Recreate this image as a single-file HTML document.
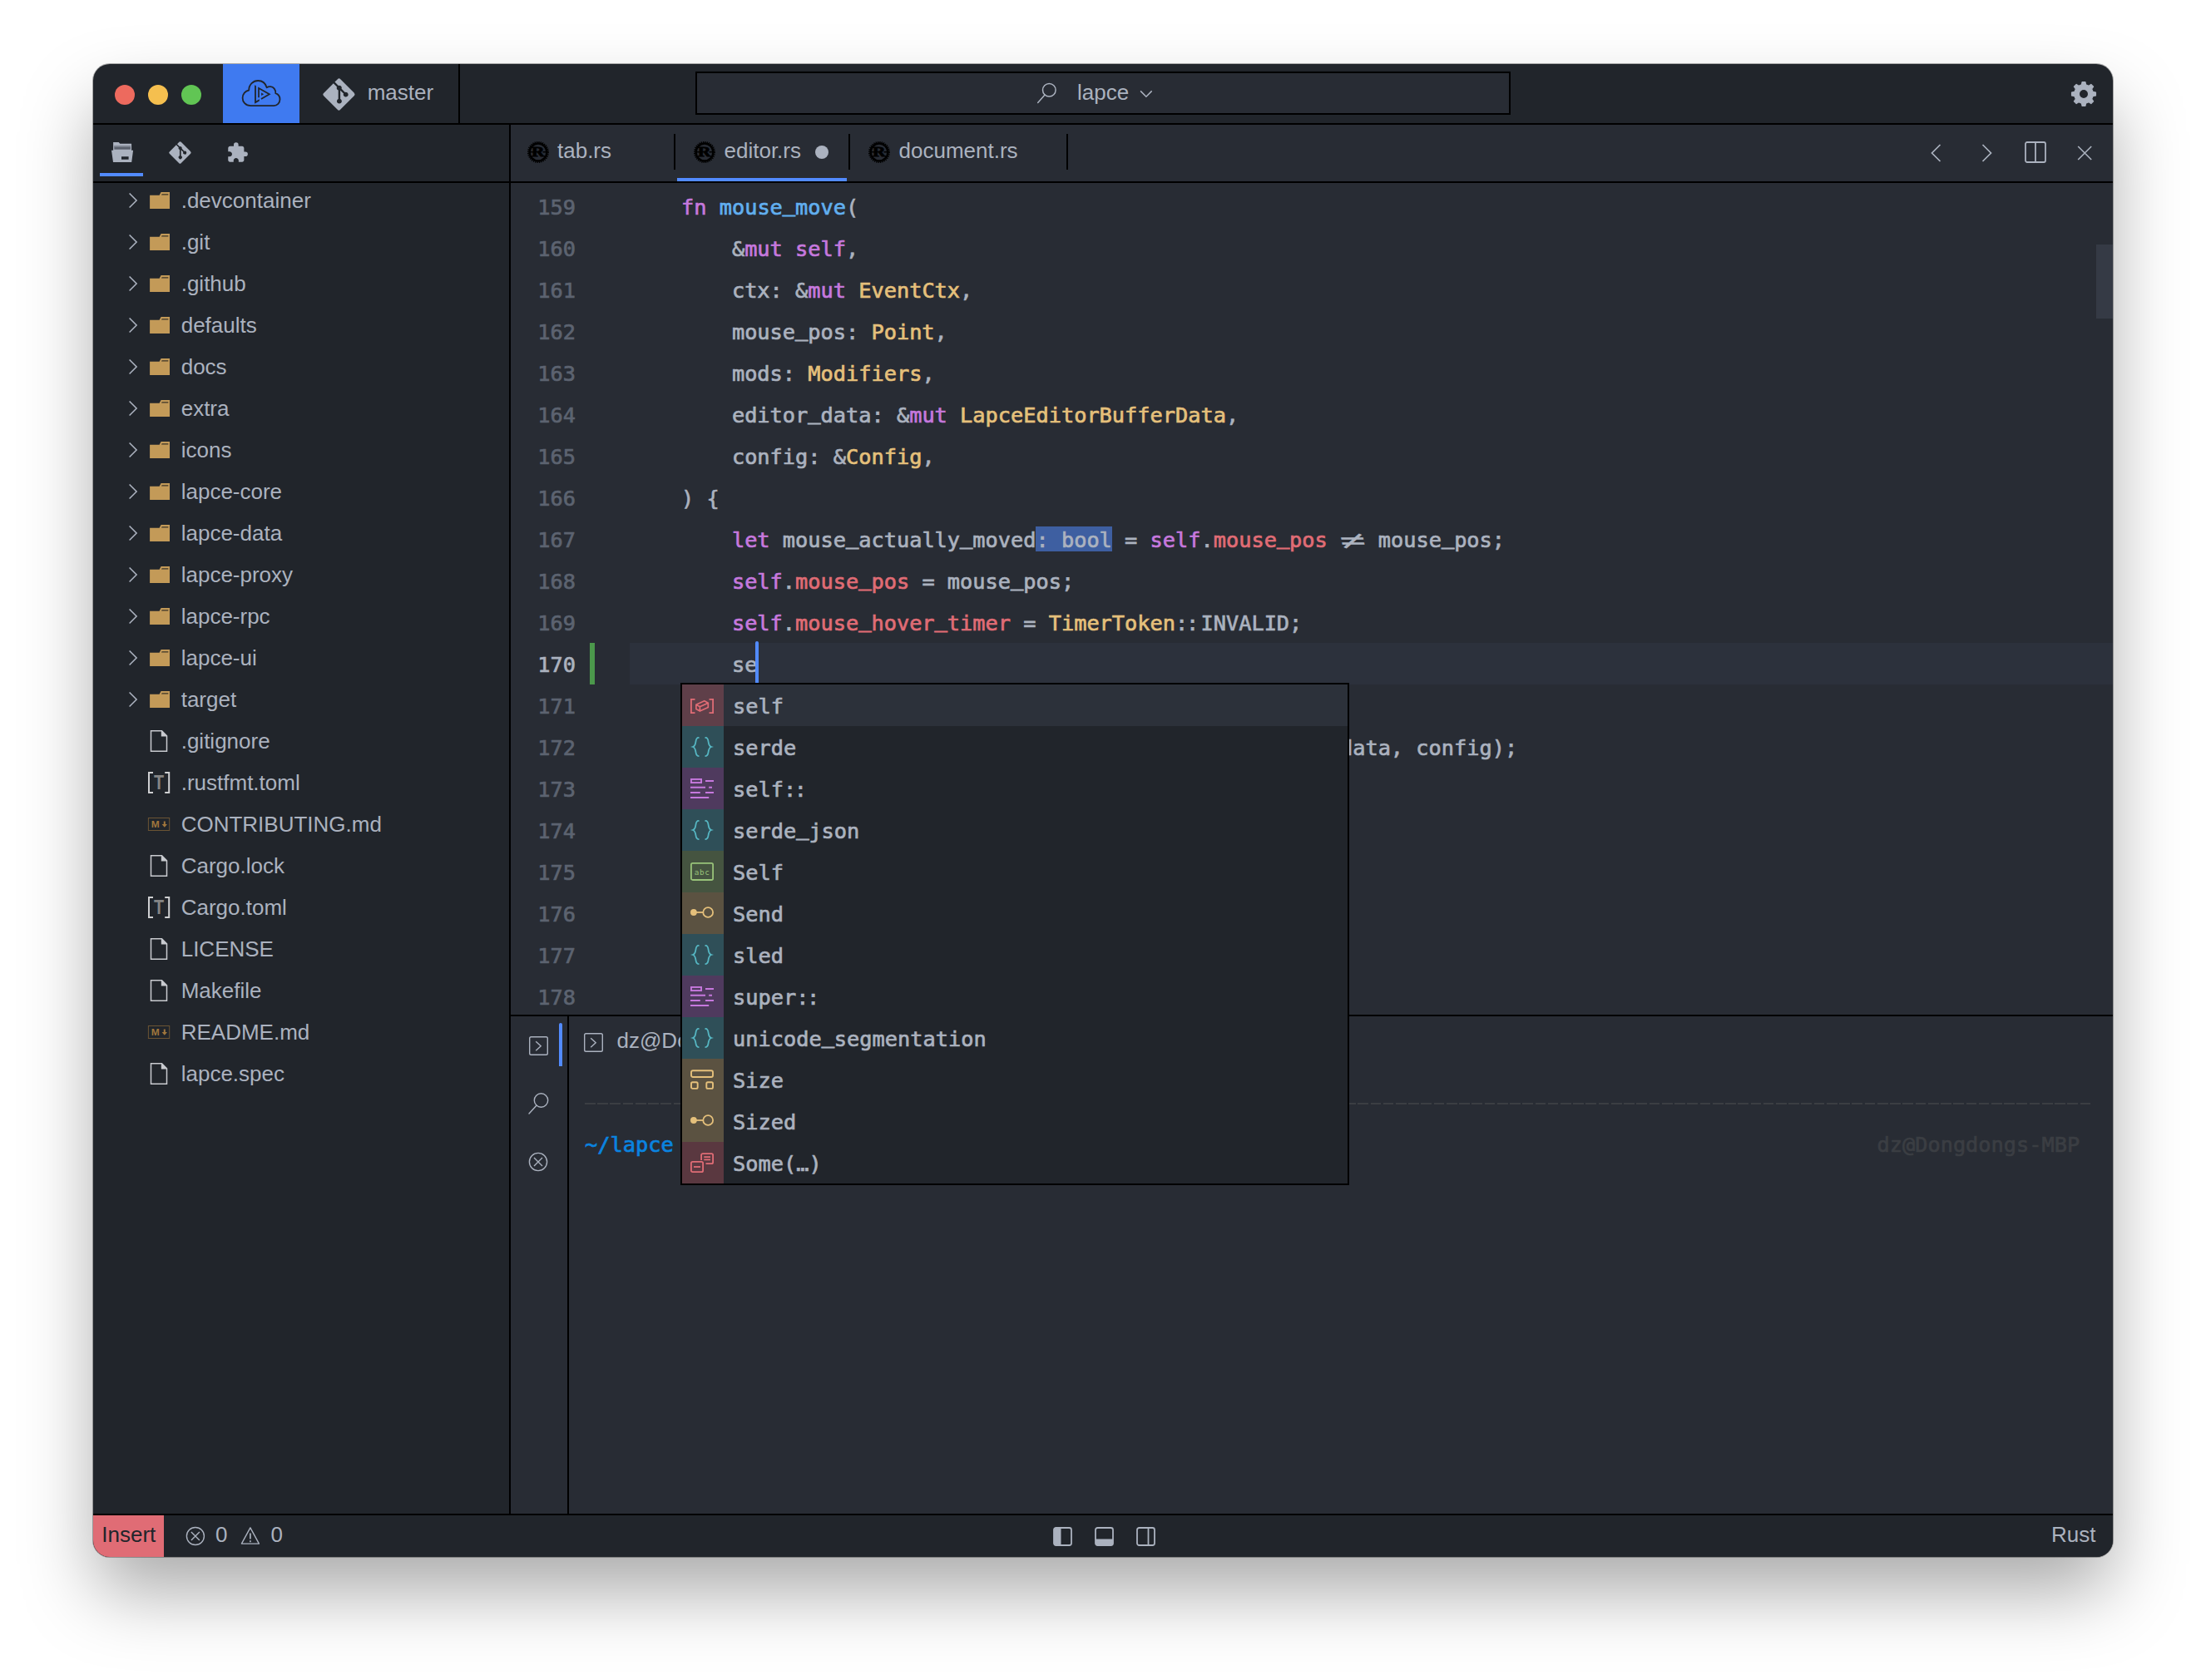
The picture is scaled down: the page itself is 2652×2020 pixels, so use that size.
<!DOCTYPE html>
<html lang="en"><head><meta charset="utf-8"><title>lapce</title>
<style>
html,body{margin:0;padding:0;background:#fff;}
body{width:2652px;height:2020px;position:relative;overflow:hidden;}
#win{position:absolute;left:112px;top:77px;width:2428px;height:1795px;border-radius:20px;background:#21252b;
 box-shadow:0 0 0 1px rgba(0,0,0,.3),0 45px 88px -4px rgba(0,0,0,.34);}
#clip{position:absolute;left:112px;top:77px;width:2428px;height:1795px;border-radius:20px;overflow:hidden;}
#clip>div,#clip>svg{position:absolute;}
#in{position:absolute;left:-112px;top:-77px;width:2652px;height:2020px;}
#in>div,#in>svg{position:absolute;}
.ui{font-family:"Liberation Sans",sans-serif;font-size:26px;line-height:50px;height:50px;white-space:pre;color:#abb2bf;}
.mono{font-family:"DejaVu Sans Mono","Liberation Mono",monospace;font-size:25.3px;line-height:50px;height:50px;white-space:pre;color:#abb2bf;margin-top:1.7px;-webkit-text-stroke:0.7px currentColor;}
.u{position:relative;top:-4px;-webkit-text-stroke:1.1px currentColor;}
.k{color:#c678dd}.f{color:#61afef}.t{color:#e5c07b}.r{color:#e06c75}
.lig{display:inline-block;width:30.468px;text-align:center;transform:skewX(11deg) scale(2.05,1.2);-webkit-text-stroke:0;}
.hint{background:linear-gradient(#3e5fa1,#3e5fa1) no-repeat 0 0/100% 30px;padding-top:1.500px;color:#abb2bf;}
.lig2{letter-spacing:-2.300px;margin-right:4.600px;}</style></head>
<body>
<div id="win"></div>
<div id="clip"><div id="in">
<div style="left:614px;top:150px;width:1926px;height:1670px;background:#282c34;"></div>
<div style="left:112px;top:148px;width:2428px;height:2px;background:#000;"></div>
<div style="left:268px;top:77px;width:92px;height:71px;background:#3f7af0;"></div>
<div style="left:551px;top:77px;width:2px;height:71px;background:#000;"></div>
<div style="left:836px;top:86px;width:980px;height:52px;background:#282c34;box-sizing:border-box;border:2px solid #000;"></div>
<div style="left:612px;top:150px;width:2px;height:1670px;background:#000;"></div>
<div style="left:112px;top:218px;width:2428px;height:2px;background:#000;"></div>
<div style="left:112px;top:1820px;width:2428px;height:2px;background:#000;"></div>
<div style="left:112px;top:1822px;width:2428px;height:50px;background:#21252b;"></div>
<div style="left:112px;top:1822px;width:85px;height:50px;background:#e06c75;"></div>
<div style="left:614px;top:1220px;width:1926px;height:2px;background:#000;"></div>
<div style="left:614px;top:1222px;width:68px;height:598px;background:#282c34;"></div>
<div style="left:682px;top:1222px;width:2px;height:598px;background:#000;"></div>
<div style="left:138px;top:102px;width:24px;height:24px;border-radius:50%;background:#ed6a5e;"></div>
<div style="left:178px;top:102px;width:24px;height:24px;border-radius:50%;background:#f5bf4f;"></div>
<div style="left:218px;top:102px;width:24px;height:24px;border-radius:50%;background:#61c554;"></div>
<svg style="left:268px;top:77px;" width="92" height="71" viewBox="0 0 92 71"><g fill="none" stroke="#21252b" stroke-width="1.800" stroke-linejoin="round"><path d="M33.500 50.100 C27 50.100 23.600 45.500 23.600 40.800 C23.600 36 27 32.300 31.200 31.500 C31.200 24.500 36.500 20 42.200 20 C47.500 20 51.300 23.500 52.700 28.300 C54 27.300 55.500 27 57 27.100 C61 27.300 63.600 31 63.300 35.200 C66.500 36.300 68.500 39.300 68.500 42.600 C68.500 46.800 65.300 50.100 61.200 50.100 Z"/></g><path fill="#21252b" d="M38.100 25.200 L39.900 26.300 L39.900 44.400 L43.800 42.200 L43.800 44.400 L38.100 47.700 Z"/><path fill="none" stroke="#21252b" stroke-width="1.700" stroke-linejoin="miter" d="M43 40.300 V28.900 L55.900 36.300 L46 42"/><path fill="#21252b" d="M46.100 34.500 L49.200 36.300 L46.100 38.100 Z"/></svg>
<svg style="left:387.5px;top:93.5px;" width="39" height="39" viewBox="0 0 24 24"><path fill="#abb2bf" d="M23.3 10.9 13.1 0.7a1.5 1.5 0 0 0-2.1 0L8.9 2.8l2.7 2.7a1.8 1.8 0 0 1 2.3 2.3l2.6 2.6a1.8 1.8 0 1 1-1.1 1L13 9v6.4a1.8 1.8 0 1 1-1.5 0V8.900a1.8 1.8 0 0 1-1-2.400L7.900 3.800 0.700 11a1.5 1.5 0 0 0 0 2.100l10.200 10.200a1.500 1.500 0 0 0 2.100 0l10.200-10.200a1.500 1.500 0 0 0 0-2.100z"/></svg>
<div class="ui" style="left:441.7px;top:85.5px;">master</div>
<svg style="left:1240px;top:94px;" width="36" height="36" viewBox="1240 94 36 36"><g fill="none" stroke="#abb2bf" stroke-width="1.500" stroke-linecap="round"><circle cx="1261.300" cy="108.200" r="7.800"/><path d="M1256.100 114 L1247.700 123.400"/></g></svg>
<div class="ui" style="left:1295px;top:85.5px;">lapce</div>
<svg style="left:1366px;top:102px;" width="24" height="22" viewBox="1366 102 24 22"><path fill="none" stroke="#abb2bf" stroke-width="1.500" d="M1371.100 109.400 L1377.900 116.200 L1384.700 109.400"/></svg>
<svg style="left:2486px;top:94px;" width="38" height="38" viewBox="2486 94 38 38"><path fill="#abb2bf" fill-rule="evenodd" stroke="#abb2bf" stroke-width="1.200" stroke-linejoin="round" d="M2502.43 101.89 L2503.06 98.53 L2506.94 98.53 L2507.57 101.89 L2511.03 103.33 L2513.86 101.39 L2516.61 104.14 L2514.67 106.97 L2516.11 110.43 L2519.47 111.06 L2519.47 114.94 L2516.11 115.57 L2514.67 119.03 L2516.61 121.86 L2513.86 124.61 L2511.03 122.67 L2507.57 124.11 L2506.94 127.47 L2503.06 127.47 L2502.43 124.11 L2498.97 122.67 L2496.14 124.61 L2493.39 121.86 L2495.33 119.03 L2493.89 115.57 L2490.53 114.94 L2490.53 111.06 L2493.89 110.43 L2495.33 106.97 L2493.39 104.14 L2496.14 101.39 L2498.97 103.33 Z M2510.60 113.00 A5.6 5.6 0 1 0 2499.40 113.00 A5.6 5.6 0 1 0 2510.60 113.00 Z"/></svg>
<svg style="left:130px;top:166px;" width="34" height="34" viewBox="130 166 34 34"><path fill="#abb2bf" d="M136.100 170.900 H142.700 L144.300 172.700 H158.100 V182 H136.100 Z"/><rect x="137.300" y="175.300" width="19.600" height="4.400" fill="#5a606c"/><rect x="137.300" y="175.300" width="19.600" height="1.500" fill="#868c99"/><path fill="#abb2bf" fill-rule="evenodd" d="M134 180.700 H160.100 L158.200 194.900 H136 Z M146 188.200 V191.800 H154.600 V188.200 Z"/></svg>
<div style="left:120px;top:208px;width:52px;height:4px;background:#528bff;"></div>
<svg style="left:203px;top:170px;" width="27" height="27" viewBox="0 0 24 24"><path fill="#abb2bf" d="M23.3 10.9 13.1 0.7a1.5 1.5 0 0 0-2.1 0L8.9 2.8l2.7 2.7a1.8 1.8 0 0 1 2.3 2.3l2.6 2.6a1.8 1.8 0 1 1-1.1 1L13 9v6.4a1.8 1.8 0 1 1-1.5 0V8.900a1.8 1.8 0 0 1-1-2.400L7.900 3.800 0.700 11a1.5 1.5 0 0 0 0 2.100l10.200 10.200a1.500 1.500 0 0 0 2.100 0l10.200-10.200a1.500 1.500 0 0 0 0-2.100z"/></svg>
<svg style="left:272px;top:170px;" width="27" height="27" viewBox="0 0 24 24"><path fill="#abb2bf" d="M20.500 11H19V7c0-1.100-.900-2-2-2h-4V3.500a2.500 2.500 0 0 0-5 0V5H4c-1.100 0-1.990.900-1.990 2v3.800H3.500c1.490 0 2.700 1.210 2.700 2.700s-1.210 2.700-2.700 2.700H2V20c0 1.100.900 2 2 2h3.800v-1.500c0-1.490 1.210-2.700 2.700-2.700 1.490 0 2.700 1.210 2.700 2.700V22H17c1.100 0 2-.900 2-2v-4h1.500a2.500 2.500 0 0 0 0-5z"/></svg>
<div class="ui" style="left:217.7px;top:215.5px;">.devcontainer</div>
<svg style="left:150px;top:226px;" width="20" height="30" viewBox="150 226 20 30"><path fill="none" stroke="#abb2bf" stroke-width="1.600" d="M155.600 232.5 L164.100 241 L155.600 249.5"/></svg>
<svg style="left:176px;top:226px;" width="32" height="30" viewBox="176 226 32 30"><path fill="#c39a58" d="M180.100 234.7 H204 V251 H180.100 Z M191.600 234.7 L193.600 230.9 H204 V234.7 Z"/><path fill="#3a3327" d="M194.600 233.3 H202.300 V234.6 H194 Z"/></svg>
<div class="ui" style="left:217.7px;top:265.5px;">.git</div>
<svg style="left:150px;top:276px;" width="20" height="30" viewBox="150 276 20 30"><path fill="none" stroke="#abb2bf" stroke-width="1.600" d="M155.600 282.5 L164.100 291 L155.600 299.5"/></svg>
<svg style="left:176px;top:276px;" width="32" height="30" viewBox="176 276 32 30"><path fill="#c39a58" d="M180.100 284.7 H204 V301 H180.100 Z M191.600 284.7 L193.600 280.9 H204 V284.7 Z"/><path fill="#3a3327" d="M194.600 283.3 H202.300 V284.6 H194 Z"/></svg>
<div class="ui" style="left:217.7px;top:315.5px;">.github</div>
<svg style="left:150px;top:326px;" width="20" height="30" viewBox="150 326 20 30"><path fill="none" stroke="#abb2bf" stroke-width="1.600" d="M155.600 332.5 L164.100 341 L155.600 349.5"/></svg>
<svg style="left:176px;top:326px;" width="32" height="30" viewBox="176 326 32 30"><path fill="#c39a58" d="M180.100 334.7 H204 V351 H180.100 Z M191.600 334.7 L193.600 330.9 H204 V334.7 Z"/><path fill="#3a3327" d="M194.600 333.3 H202.300 V334.6 H194 Z"/></svg>
<div class="ui" style="left:217.7px;top:365.5px;">defaults</div>
<svg style="left:150px;top:376px;" width="20" height="30" viewBox="150 376 20 30"><path fill="none" stroke="#abb2bf" stroke-width="1.600" d="M155.600 382.5 L164.100 391 L155.600 399.5"/></svg>
<svg style="left:176px;top:376px;" width="32" height="30" viewBox="176 376 32 30"><path fill="#c39a58" d="M180.100 384.7 H204 V401 H180.100 Z M191.600 384.7 L193.600 380.9 H204 V384.7 Z"/><path fill="#3a3327" d="M194.600 383.3 H202.300 V384.6 H194 Z"/></svg>
<div class="ui" style="left:217.7px;top:415.5px;">docs</div>
<svg style="left:150px;top:426px;" width="20" height="30" viewBox="150 426 20 30"><path fill="none" stroke="#abb2bf" stroke-width="1.600" d="M155.600 432.5 L164.100 441 L155.600 449.5"/></svg>
<svg style="left:176px;top:426px;" width="32" height="30" viewBox="176 426 32 30"><path fill="#c39a58" d="M180.100 434.7 H204 V451 H180.100 Z M191.600 434.7 L193.600 430.9 H204 V434.7 Z"/><path fill="#3a3327" d="M194.600 433.3 H202.300 V434.6 H194 Z"/></svg>
<div class="ui" style="left:217.7px;top:465.5px;">extra</div>
<svg style="left:150px;top:476px;" width="20" height="30" viewBox="150 476 20 30"><path fill="none" stroke="#abb2bf" stroke-width="1.600" d="M155.600 482.5 L164.100 491 L155.600 499.5"/></svg>
<svg style="left:176px;top:476px;" width="32" height="30" viewBox="176 476 32 30"><path fill="#c39a58" d="M180.100 484.7 H204 V501 H180.100 Z M191.600 484.7 L193.600 480.9 H204 V484.7 Z"/><path fill="#3a3327" d="M194.600 483.3 H202.300 V484.6 H194 Z"/></svg>
<div class="ui" style="left:217.7px;top:515.5px;">icons</div>
<svg style="left:150px;top:526px;" width="20" height="30" viewBox="150 526 20 30"><path fill="none" stroke="#abb2bf" stroke-width="1.600" d="M155.600 532.5 L164.100 541 L155.600 549.5"/></svg>
<svg style="left:176px;top:526px;" width="32" height="30" viewBox="176 526 32 30"><path fill="#c39a58" d="M180.100 534.7 H204 V551 H180.100 Z M191.600 534.7 L193.600 530.9 H204 V534.7 Z"/><path fill="#3a3327" d="M194.600 533.3 H202.300 V534.6 H194 Z"/></svg>
<div class="ui" style="left:217.7px;top:565.5px;">lapce-core</div>
<svg style="left:150px;top:576px;" width="20" height="30" viewBox="150 576 20 30"><path fill="none" stroke="#abb2bf" stroke-width="1.600" d="M155.600 582.5 L164.100 591 L155.600 599.5"/></svg>
<svg style="left:176px;top:576px;" width="32" height="30" viewBox="176 576 32 30"><path fill="#c39a58" d="M180.100 584.7 H204 V601 H180.100 Z M191.600 584.7 L193.600 580.9 H204 V584.7 Z"/><path fill="#3a3327" d="M194.600 583.3 H202.300 V584.6 H194 Z"/></svg>
<div class="ui" style="left:217.7px;top:615.5px;">lapce-data</div>
<svg style="left:150px;top:626px;" width="20" height="30" viewBox="150 626 20 30"><path fill="none" stroke="#abb2bf" stroke-width="1.600" d="M155.600 632.5 L164.100 641 L155.600 649.5"/></svg>
<svg style="left:176px;top:626px;" width="32" height="30" viewBox="176 626 32 30"><path fill="#c39a58" d="M180.100 634.7 H204 V651 H180.100 Z M191.600 634.7 L193.600 630.9 H204 V634.7 Z"/><path fill="#3a3327" d="M194.600 633.3 H202.300 V634.6 H194 Z"/></svg>
<div class="ui" style="left:217.7px;top:665.5px;">lapce-proxy</div>
<svg style="left:150px;top:676px;" width="20" height="30" viewBox="150 676 20 30"><path fill="none" stroke="#abb2bf" stroke-width="1.600" d="M155.600 682.5 L164.100 691 L155.600 699.5"/></svg>
<svg style="left:176px;top:676px;" width="32" height="30" viewBox="176 676 32 30"><path fill="#c39a58" d="M180.100 684.7 H204 V701 H180.100 Z M191.600 684.7 L193.600 680.9 H204 V684.7 Z"/><path fill="#3a3327" d="M194.600 683.3 H202.300 V684.6 H194 Z"/></svg>
<div class="ui" style="left:217.7px;top:715.5px;">lapce-rpc</div>
<svg style="left:150px;top:726px;" width="20" height="30" viewBox="150 726 20 30"><path fill="none" stroke="#abb2bf" stroke-width="1.600" d="M155.600 732.5 L164.100 741 L155.600 749.5"/></svg>
<svg style="left:176px;top:726px;" width="32" height="30" viewBox="176 726 32 30"><path fill="#c39a58" d="M180.100 734.7 H204 V751 H180.100 Z M191.600 734.7 L193.600 730.9 H204 V734.7 Z"/><path fill="#3a3327" d="M194.600 733.3 H202.300 V734.6 H194 Z"/></svg>
<div class="ui" style="left:217.7px;top:765.5px;">lapce-ui</div>
<svg style="left:150px;top:776px;" width="20" height="30" viewBox="150 776 20 30"><path fill="none" stroke="#abb2bf" stroke-width="1.600" d="M155.600 782.5 L164.100 791 L155.600 799.5"/></svg>
<svg style="left:176px;top:776px;" width="32" height="30" viewBox="176 776 32 30"><path fill="#c39a58" d="M180.100 784.7 H204 V801 H180.100 Z M191.600 784.7 L193.600 780.9 H204 V784.7 Z"/><path fill="#3a3327" d="M194.600 783.3 H202.300 V784.6 H194 Z"/></svg>
<div class="ui" style="left:217.7px;top:815.5px;">target</div>
<svg style="left:150px;top:826px;" width="20" height="30" viewBox="150 826 20 30"><path fill="none" stroke="#abb2bf" stroke-width="1.600" d="M155.600 832.5 L164.100 841 L155.600 849.5"/></svg>
<svg style="left:176px;top:826px;" width="32" height="30" viewBox="176 826 32 30"><path fill="#c39a58" d="M180.100 834.7 H204 V851 H180.100 Z M191.600 834.7 L193.600 830.9 H204 V834.7 Z"/><path fill="#3a3327" d="M194.600 833.3 H202.300 V834.6 H194 Z"/></svg>
<div class="ui" style="left:217.7px;top:865.5px;">.gitignore</div>
<svg style="left:176px;top:874px;" width="32" height="34" viewBox="176 874 32 34"><path fill="none" stroke="#c9cbd0" stroke-width="1.500" stroke-linejoin="miter" d="M181.500 878.7 H194.500 L200.500 884.7 V903.3 H181.500 Z"/><path fill="#c9cbd0" d="M193.800 878.2 L201.100 885.5 H193.800 Z"/></svg>
<div class="ui" style="left:217.7px;top:915.5px;">.rustfmt.toml</div>
<svg style="left:174px;top:924px;" width="34" height="34" viewBox="174 924 34 34"><path fill="none" stroke="#cfd0d2" stroke-width="2" d="M184 928.9 H179 V952.9 H184 M198.200 928.9 H203.200 V952.9 H198.200"/><text x="191.100" y="949" text-anchor="middle" font-family="Liberation Sans,sans-serif" font-weight="bold" font-size="23" fill="#858585" transform="translate(191.100 0) scale(0.860 1) translate(-191.100 0)">T</text></svg>
<div class="ui" style="left:217.7px;top:965.5px;">CONTRIBUTING.md</div>
<svg style="left:174px;top:978px;" width="34" height="28" viewBox="174 978 34 28"><rect x="178.400" y="983.5" width="25.300" height="15" fill="none" stroke="#6b5434" stroke-width="1"/><text x="0" y="994.6" font-family="Liberation Sans,sans-serif" font-weight="bold" font-size="10" fill="#a0763c" transform="translate(181.700 0) scale(1.200 1)">M</text><path fill="#a0763c" d="M196.800 987.4 H198.800 V991 H201 L197.800 994.8 L194.600 991 H196.800 Z"/></svg>
<div class="ui" style="left:217.7px;top:1015.5px;">Cargo.lock</div>
<svg style="left:176px;top:1024px;" width="32" height="34" viewBox="176 1024 32 34"><path fill="none" stroke="#c9cbd0" stroke-width="1.500" stroke-linejoin="miter" d="M181.500 1028.7 H194.500 L200.500 1034.7 V1053.3 H181.500 Z"/><path fill="#c9cbd0" d="M193.800 1028.2 L201.100 1035.5 H193.800 Z"/></svg>
<div class="ui" style="left:217.7px;top:1065.5px;">Cargo.toml</div>
<svg style="left:174px;top:1074px;" width="34" height="34" viewBox="174 1074 34 34"><path fill="none" stroke="#cfd0d2" stroke-width="2" d="M184 1078.9 H179 V1102.9 H184 M198.200 1078.9 H203.200 V1102.9 H198.200"/><text x="191.100" y="1099" text-anchor="middle" font-family="Liberation Sans,sans-serif" font-weight="bold" font-size="23" fill="#858585" transform="translate(191.100 0) scale(0.860 1) translate(-191.100 0)">T</text></svg>
<div class="ui" style="left:217.7px;top:1115.5px;">LICENSE</div>
<svg style="left:176px;top:1124px;" width="32" height="34" viewBox="176 1124 32 34"><path fill="none" stroke="#c9cbd0" stroke-width="1.500" stroke-linejoin="miter" d="M181.500 1128.7 H194.500 L200.500 1134.7 V1153.3 H181.500 Z"/><path fill="#c9cbd0" d="M193.800 1128.2 L201.100 1135.5 H193.800 Z"/></svg>
<div class="ui" style="left:217.7px;top:1165.5px;">Makefile</div>
<svg style="left:176px;top:1174px;" width="32" height="34" viewBox="176 1174 32 34"><path fill="none" stroke="#c9cbd0" stroke-width="1.500" stroke-linejoin="miter" d="M181.500 1178.7 H194.500 L200.500 1184.7 V1203.3 H181.500 Z"/><path fill="#c9cbd0" d="M193.800 1178.2 L201.100 1185.5 H193.800 Z"/></svg>
<div class="ui" style="left:217.7px;top:1215.5px;">README.md</div>
<svg style="left:174px;top:1228px;" width="34" height="28" viewBox="174 1228 34 28"><rect x="178.400" y="1233.5" width="25.300" height="15" fill="none" stroke="#6b5434" stroke-width="1"/><text x="0" y="1244.6" font-family="Liberation Sans,sans-serif" font-weight="bold" font-size="10" fill="#a0763c" transform="translate(181.700 0) scale(1.200 1)">M</text><path fill="#a0763c" d="M196.800 1237.4 H198.800 V1241 H201 L197.800 1244.8 L194.600 1241 H196.800 Z"/></svg>
<div class="ui" style="left:217.7px;top:1265.5px;">lapce.spec</div>
<svg style="left:176px;top:1274px;" width="32" height="34" viewBox="176 1274 32 34"><path fill="none" stroke="#c9cbd0" stroke-width="1.500" stroke-linejoin="miter" d="M181.500 1278.7 H194.500 L200.500 1284.7 V1303.3 H181.500 Z"/><path fill="#c9cbd0" d="M193.800 1278.2 L201.100 1285.5 H193.800 Z"/></svg>
<svg style="left:634px;top:170px;" width="26" height="26" viewBox="0 0 26 26"><circle cx="13" cy="13" r="12.100" fill="none" stroke="#000" stroke-width="1.900" stroke-dasharray="1.250 1.126"/><circle cx="13" cy="13" r="10.400" fill="none" stroke="#000" stroke-width="2.500"/><path d="M3.500 12.800 H8 M18.500 12.800 H22.500" stroke="#000" stroke-width="1.600"/><text x="13" y="18.400" text-anchor="middle" font-family="Liberation Serif,serif" font-weight="bold" font-size="16.800" fill="#000" stroke="#000" stroke-width="0.800" transform="translate(12.800 0) scale(1.270 1) translate(-13 0)" style="-webkit-font-smoothing:antialiased">R</text></svg>
<div class="ui" style="left:670px;top:155.5px;">tab.rs</div>
<div style="left:810px;top:161px;width:2px;height:43px;background:#000;"></div>
<svg style="left:834px;top:170px;" width="26" height="26" viewBox="0 0 26 26"><circle cx="13" cy="13" r="12.100" fill="none" stroke="#000" stroke-width="1.900" stroke-dasharray="1.250 1.126"/><circle cx="13" cy="13" r="10.400" fill="none" stroke="#000" stroke-width="2.500"/><path d="M3.500 12.800 H8 M18.500 12.800 H22.500" stroke="#000" stroke-width="1.600"/><text x="13" y="18.400" text-anchor="middle" font-family="Liberation Serif,serif" font-weight="bold" font-size="16.800" fill="#000" stroke="#000" stroke-width="0.800" transform="translate(12.800 0) scale(1.270 1) translate(-13 0)" style="-webkit-font-smoothing:antialiased">R</text></svg>
<div class="ui" style="left:870.5px;top:155.5px;">editor.rs</div>
<div style="left:980px;top:175px;width:16px;height:16px;border-radius:50%;background:#abb2bf;"></div>
<div style="left:1020px;top:161px;width:2px;height:43px;background:#000;"></div>
<svg style="left:1044px;top:170px;" width="26" height="26" viewBox="0 0 26 26"><circle cx="13" cy="13" r="12.100" fill="none" stroke="#000" stroke-width="1.900" stroke-dasharray="1.250 1.126"/><circle cx="13" cy="13" r="10.400" fill="none" stroke="#000" stroke-width="2.500"/><path d="M3.500 12.800 H8 M18.500 12.800 H22.500" stroke="#000" stroke-width="1.600"/><text x="13" y="18.400" text-anchor="middle" font-family="Liberation Serif,serif" font-weight="bold" font-size="16.800" fill="#000" stroke="#000" stroke-width="0.800" transform="translate(12.800 0) scale(1.270 1) translate(-13 0)" style="-webkit-font-smoothing:antialiased">R</text></svg>
<div class="ui" style="left:1080.5px;top:155.5px;">document.rs</div>
<div style="left:1282px;top:161px;width:2px;height:43px;background:#000;"></div>
<div style="left:814px;top:214px;width:204px;height:4px;background:#528bff;"></div>
<svg style="left:2315px;top:171px;" width="26" height="26" viewBox="0 0 26 26"><path fill="none" stroke="#abb2bf" stroke-width="1.700" d="M17.500 3 L7.500 13 L17.500 23"/></svg>
<svg style="left:2375px;top:171px;" width="26" height="26" viewBox="0 0 26 26"><path fill="none" stroke="#abb2bf" stroke-width="1.700" d="M8.500 3 L18.500 13 L8.500 23"/></svg>
<svg style="left:2433px;top:169px;" width="28" height="28" viewBox="0 0 28 28"><g fill="none" stroke="#abb2bf" stroke-width="1.800"><rect x="2" y="2" width="24" height="24" rx="2"/><path d="M14 2 V26"/></g></svg>
<svg style="left:2493px;top:171px;" width="26" height="26" viewBox="2493 171 26 26"><path fill="none" stroke="#abb2bf" stroke-width="1.600" d="M2498.200 176 L2514.200 192 M2514.200 176 L2498.200 192"/></svg>
<div style="left:757px;top:773px;width:1783px;height:50px;background:#2c313c;"></div>
<div style="left:709px;top:773px;width:6px;height:50px;background:#4b984b;"></div>
<div class="mono" style="left:646.298px;top:223px;color:#5c6370;">159</div>
<div class="mono" style="left:758.064px;top:223px;">    <span class="k">fn</span> <span class="f">mouse<span class="u">_</span>move</span>(</div>
<div class="mono" style="left:646.298px;top:273px;color:#5c6370;">160</div>
<div class="mono" style="left:758.064px;top:273px;">        &amp;<span class="k">mut</span> <span class="k">self</span>,</div>
<div class="mono" style="left:646.298px;top:323px;color:#5c6370;">161</div>
<div class="mono" style="left:758.064px;top:323px;">        ctx: &amp;<span class="k">mut</span> <span class="t">EventCtx</span>,</div>
<div class="mono" style="left:646.298px;top:373px;color:#5c6370;">162</div>
<div class="mono" style="left:758.064px;top:373px;">        mouse<span class="u">_</span>pos: <span class="t">Point</span>,</div>
<div class="mono" style="left:646.298px;top:423px;color:#5c6370;">163</div>
<div class="mono" style="left:758.064px;top:423px;">        mods: <span class="t">Modifiers</span>,</div>
<div class="mono" style="left:646.298px;top:473px;color:#5c6370;">164</div>
<div class="mono" style="left:758.064px;top:473px;">        editor<span class="u">_</span>data: &amp;<span class="k">mut</span> <span class="t">LapceEditorBufferData</span>,</div>
<div class="mono" style="left:646.298px;top:523px;color:#5c6370;">165</div>
<div class="mono" style="left:758.064px;top:523px;">        config: &amp;<span class="t">Config</span>,</div>
<div class="mono" style="left:646.298px;top:573px;color:#5c6370;">166</div>
<div class="mono" style="left:758.064px;top:573px;">    ) {</div>
<div class="mono" style="left:646.298px;top:623px;color:#5c6370;">167</div>
<div class="mono" style="left:758.064px;top:623px;">        <span class="k">let</span> mouse<span class="u">_</span>actually<span class="u">_</span>moved<span class="hint">: bool</span> = <span class="k">self</span>.<span class="r">mouse<span class="u">_</span>pos</span> <span class="lig">≠</span> mouse<span class="u">_</span>pos;</div>
<div class="mono" style="left:646.298px;top:673px;color:#5c6370;">168</div>
<div class="mono" style="left:758.064px;top:673px;">        <span class="k">self</span>.<span class="r">mouse<span class="u">_</span>pos</span> = mouse<span class="u">_</span>pos;</div>
<div class="mono" style="left:646.298px;top:723px;color:#5c6370;">169</div>
<div class="mono" style="left:758.064px;top:723px;">        <span class="k">self</span>.<span class="r">mouse<span class="u">_</span>hover<span class="u">_</span>timer</span> = <span class="t">TimerToken</span><span class="lig2">::</span>INVALID;</div>
<div class="mono" style="left:646.298px;top:773px;color:#abb2bf;">170</div>
<div class="mono" style="left:758.064px;top:773px;">        se</div>
<div class="mono" style="left:646.298px;top:823px;color:#5c6370;">171</div>
<div class="mono" style="left:646.298px;top:873px;color:#5c6370;">172</div>
<div class="mono" style="left:758.064px;top:873px;">                                                        data, config);</div>
<div class="mono" style="left:646.298px;top:923px;color:#5c6370;">173</div>
<div class="mono" style="left:646.298px;top:973px;color:#5c6370;">174</div>
<div class="mono" style="left:646.298px;top:1023px;color:#5c6370;">175</div>
<div class="mono" style="left:646.298px;top:1073px;color:#5c6370;">176</div>
<div class="mono" style="left:646.298px;top:1123px;color:#5c6370;">177</div>
<div class="mono" style="left:646.298px;top:1173px;color:#5c6370;">178</div>
<div style="left:908px;top:771px;width:4px;height:52px;background:#528bff;border-radius:2px 2px 0 0;"></div>
<div style="left:2520px;top:294px;width:20px;height:89px;background:#353a45;"></div>
<svg style="left:633.7px;top:1243.8px;" width="28" height="28" viewBox="633.7 1243.8 28 28"><g fill="none" stroke="#abb2bf" stroke-width="1.400"><rect x="636.4000000000001" y="1246.5" width="21.600" height="21.600" rx="1.800"/><path d="M643.9000000000001 1252.1 L649.9000000000001 1257.6 L643.9000000000001 1263.1"/></g></svg>
<div style="left:672px;top:1230px;width:4px;height:52px;background:#528bff;border-radius:2px 2px 0 0;"></div>
<svg style="left:630px;top:1310px;" width="34" height="34" viewBox="630 1310 34 34"><g fill="none" stroke="#abb2bf" stroke-width="1.400" stroke-linecap="round"><circle cx="650.500" cy="1323" r="8.200"/><path d="M644.900 1329.200 L636 1339"/></g></svg>
<svg style="left:632px;top:1382px;" width="30" height="30" viewBox="632 1382 30 30"><g fill="none" stroke="#abb2bf" stroke-width="1.400"><circle cx="647" cy="1397" r="10.600"/><path d="M642 1392 L652 1402 M652 1392 L642 1402"/></g></svg>
<svg style="left:699.9px;top:1240.2px;" width="28" height="28" viewBox="699.9 1240.2 28 28"><g fill="none" stroke="#abb2bf" stroke-width="1.400"><rect x="702.6" y="1242.9" width="21.600" height="21.600" rx="1.800"/><path d="M710.1 1248.5 L716.1 1254.0 L710.1 1259.5"/></g></svg>
<div class="ui" style="left:741.5px;top:1225.7px;">dz@Dongdongs-MBP</div>
<div style="left:703.300px;top:1325.700px;width:1812.846px;height:2.200px;background:repeating-linear-gradient(90deg,#3b3e43 0,#3b3e43 12.700px,transparent 12.700px,transparent 15.234px);"></div>
<div class="mono" style="left:703px;top:1350.5px;color:#0a84e0;">~/lapce</div>
<div class="mono" style="left:2256.5px;top:1350.5px;color:#3b3e43;">dz@Dongdongs-MBP</div>
<div style="left:818px;top:821px;width:804px;height:604px;background:#000;"></div>
<div style="left:820px;top:823px;width:800px;height:600px;background:#21252b;"></div>
<div style="left:870px;top:823px;width:750px;height:50px;background:#2c313a;"></div>
<div style="left:820px;top:823px;width:50px;height:50px;background:#5f3f49;"></div>
<svg style="left:830px;top:837px;" width="28" height="24" viewBox="0 0 28 24"><g fill="none" stroke="#e06c75" stroke-width="1.800" stroke-linejoin="miter"><path d="M5.500 3.900 H0.900 V20.100 H5.500 M22.500 3.900 H27.100 V20.100 H22.500"/></g><g fill="none" stroke="#e06c75" stroke-width="1.700" stroke-linejoin="round"><path d="M6.900 10.200 L16.800 5.700 L21.300 8.300 V13.600 L11.400 18.100 L6.900 15.500 Z M6.900 10.200 L11.400 12.800 L21.300 8.300 M11.400 12.800 V18.100"/></g></svg>
<div class="mono" style="left:881px;top:823px;">self</div>
<div style="left:820px;top:873px;width:50px;height:50px;background:#2f4f58;"></div>
<svg style="left:830px;top:886px;" width="28" height="24" viewBox="0 0 28 24"><g fill="none" stroke="#56b6c2" stroke-width="1.800" stroke-linecap="round"><path d="M9.800 0.900 C4.300 0.900 8.600 10.300 2.800 12 C8.600 13.700 4.300 23.100 9.800 23.100"/><path d="M18.200 0.900 C23.700 0.900 19.400 10.300 25.200 12 C19.400 13.700 23.700 23.100 18.200 23.100"/></g></svg>
<div class="mono" style="left:881px;top:873px;">serde</div>
<div style="left:820px;top:923px;width:50px;height:50px;background:#4f3a5e;"></div>
<svg style="left:830px;top:936px;" width="28" height="24" viewBox="0 0 28 24"><g fill="none" stroke="#c678dd" stroke-width="1.900"><rect x="0.950" y="0.950" width="12.100" height="4.100"/><path d="M18 3 H28 M0 10.800 H18 M22.200 10.800 H26 M0 17 H11.800 M18 17 H28 M0 23 H22.200"/></g></svg>
<div class="mono" style="left:881px;top:923px;">self<span class="lig2">::</span></div>
<div style="left:820px;top:973px;width:50px;height:50px;background:#2f4f58;"></div>
<svg style="left:830px;top:986px;" width="28" height="24" viewBox="0 0 28 24"><g fill="none" stroke="#56b6c2" stroke-width="1.800" stroke-linecap="round"><path d="M9.800 0.900 C4.300 0.900 8.600 10.300 2.800 12 C8.600 13.700 4.300 23.100 9.800 23.100"/><path d="M18.200 0.900 C23.700 0.900 19.400 10.300 25.200 12 C19.400 13.700 23.700 23.100 18.200 23.100"/></g></svg>
<div class="mono" style="left:881px;top:973px;">serde<span class="u">_</span>json</div>
<div style="left:820px;top:1023px;width:50px;height:50px;background:#455440;"></div>
<svg style="left:830px;top:1036px;" width="28" height="24" viewBox="0 0 28 24"><rect x="0.900" y="1.800" width="26.200" height="20.200" rx="1.800" fill="none" stroke="#98c379" stroke-width="1.800"/><text x="14.200" y="15.500" text-anchor="middle" font-family="DejaVu Sans Mono,monospace" font-size="9.300" fill="#98c379" letter-spacing="0.700">abc</text></svg>
<div class="mono" style="left:881px;top:1023px;">Self</div>
<div style="left:820px;top:1073px;width:50px;height:50px;background:#5b5241;"></div>
<svg style="left:830px;top:1086px;" width="28" height="24" viewBox="0 0 28 24"><circle cx="3.900" cy="11" r="3.900" fill="#e5c07b"/><path d="M4 11 H15.500" stroke="#e5c07b" stroke-width="1.800"/><circle cx="21.200" cy="11" r="5.900" fill="none" stroke="#e5c07b" stroke-width="1.800"/></svg>
<div class="mono" style="left:881px;top:1073px;">Send</div>
<div style="left:820px;top:1123px;width:50px;height:50px;background:#2f4f58;"></div>
<svg style="left:830px;top:1136px;" width="28" height="24" viewBox="0 0 28 24"><g fill="none" stroke="#56b6c2" stroke-width="1.800" stroke-linecap="round"><path d="M9.800 0.900 C4.300 0.900 8.600 10.300 2.800 12 C8.600 13.700 4.300 23.100 9.800 23.100"/><path d="M18.200 0.900 C23.700 0.900 19.400 10.300 25.200 12 C19.400 13.700 23.700 23.100 18.200 23.100"/></g></svg>
<div class="mono" style="left:881px;top:1123px;">sled</div>
<div style="left:820px;top:1173px;width:50px;height:50px;background:#4f3a5e;"></div>
<svg style="left:830px;top:1186px;" width="28" height="24" viewBox="0 0 28 24"><g fill="none" stroke="#c678dd" stroke-width="1.900"><rect x="0.950" y="0.950" width="12.100" height="4.100"/><path d="M18 3 H28 M0 10.800 H18 M22.200 10.800 H26 M0 17 H11.800 M18 17 H28 M0 23 H22.200"/></g></svg>
<div class="mono" style="left:881px;top:1173px;">super<span class="lig2">::</span></div>
<div style="left:820px;top:1223px;width:50px;height:50px;background:#2f4f58;"></div>
<svg style="left:830px;top:1236px;" width="28" height="24" viewBox="0 0 28 24"><g fill="none" stroke="#56b6c2" stroke-width="1.800" stroke-linecap="round"><path d="M9.800 0.900 C4.300 0.900 8.600 10.300 2.800 12 C8.600 13.700 4.300 23.100 9.800 23.100"/><path d="M18.200 0.900 C23.700 0.900 19.400 10.300 25.200 12 C19.400 13.700 23.700 23.100 18.200 23.100"/></g></svg>
<div class="mono" style="left:881px;top:1223px;">unicode<span class="u">_</span>segmentation</div>
<div style="left:820px;top:1273px;width:50px;height:50px;background:#5b5241;"></div>
<svg style="left:830px;top:1286px;" width="28" height="24" viewBox="0 0 28 24"><g fill="none" stroke="#e5c07b" stroke-width="1.900"><rect x="1" y="1.200" width="26" height="7.800" rx="2"/><rect x="1" y="15.300" width="7.700" height="7.600" rx="1.600"/><rect x="19.300" y="15.300" width="7.700" height="7.600" rx="1.600"/></g></svg>
<div class="mono" style="left:881px;top:1273px;">Size</div>
<div style="left:820px;top:1323px;width:50px;height:50px;background:#5b5241;"></div>
<svg style="left:830px;top:1336px;" width="28" height="24" viewBox="0 0 28 24"><circle cx="3.900" cy="11" r="3.900" fill="#e5c07b"/><path d="M4 11 H15.500" stroke="#e5c07b" stroke-width="1.800"/><circle cx="21.200" cy="11" r="5.900" fill="none" stroke="#e5c07b" stroke-width="1.800"/></svg>
<div class="mono" style="left:881px;top:1323px;">Sized</div>
<div style="left:820px;top:1373px;width:50px;height:50px;background:#5a3840;"></div>
<svg style="left:830px;top:1386px;" width="28" height="24" viewBox="0 0 28 24"><g fill="none" stroke="#e06c75" stroke-width="1.800" stroke-linejoin="round"><path d="M13.100 9 V2.800 a1.700 1.700 0 0 1 1.700 -1.700 H25.400 a1.700 1.700 0 0 1 1.700 1.700 V11.400 a1.700 1.700 0 0 1 -1.700 1.700 H18.500"/><path d="M16.300 5.100 H24 M16.300 8.300 H24"/><rect x="0.900" y="10.800" width="14.200" height="12.300" rx="1.700"/><path d="M4 17 H12"/></g></svg>
<div class="mono" style="left:881px;top:1373px;">Some(…)</div>
<div class="ui" style="left:122.3px;top:1819.7px;color:#21252b;">Insert</div>
<svg style="left:220px;top:1832px;" width="30" height="30" viewBox="220 1832 30 30"><g fill="none" stroke="#abb2bf" stroke-width="1.400"><circle cx="234.900" cy="1847" r="10.500"/><path d="M229.900 1842 L239.900 1852 M239.900 1842 L229.900 1852"/></g></svg>
<div class="ui" style="left:259px;top:1819.7px;">0</div>
<svg style="left:286px;top:1832px;" width="30" height="30" viewBox="286 1832 30 30"><path fill="none" stroke="#abb2bf" stroke-width="1.400" stroke-linejoin="round" d="M300.900 1836.900 L311.400 1856.100 H290.400 Z"/><path d="M300.900 1843.500 V1850.500 M300.900 1852.300 V1854.300" stroke="#abb2bf" stroke-width="1.700"/></svg>
<div class="ui" style="left:325.5px;top:1819.7px;">0</div>
<svg style="left:1266px;top:1836px;" width="23" height="23" viewBox="0 0 23 23"><rect x="1" y="1" width="21" height="21" rx="2.500" fill="none" stroke="#abb2bf" stroke-width="1.800"/><path d="M1 3 a2 2 0 0 1 2-2 H9.500 V22 H3 a2 2 0 0 1 -2 -2 Z" fill="#abb2bf"/></svg>
<svg style="left:1316px;top:1836px;" width="23" height="23" viewBox="0 0 23 23"><rect x="1" y="1" width="21" height="21" rx="2.500" fill="none" stroke="#abb2bf" stroke-width="1.800"/><path d="M1 14.500 H22 V20 a2 2 0 0 1 -2 2 H3 a2 2 0 0 1 -2 -2 Z" fill="#abb2bf"/></svg>
<svg style="left:1366px;top:1836px;" width="23" height="23" viewBox="0 0 23 23"><rect x="1" y="1" width="21" height="21" rx="2.500" fill="none" stroke="#abb2bf" stroke-width="1.800"/><path d="M14.500 1 V22" stroke="#abb2bf" stroke-width="1.800"/></svg>
<div class="ui" style="left:2466px;top:1819.7px;">Rust</div>
</div></div>
</body></html>
